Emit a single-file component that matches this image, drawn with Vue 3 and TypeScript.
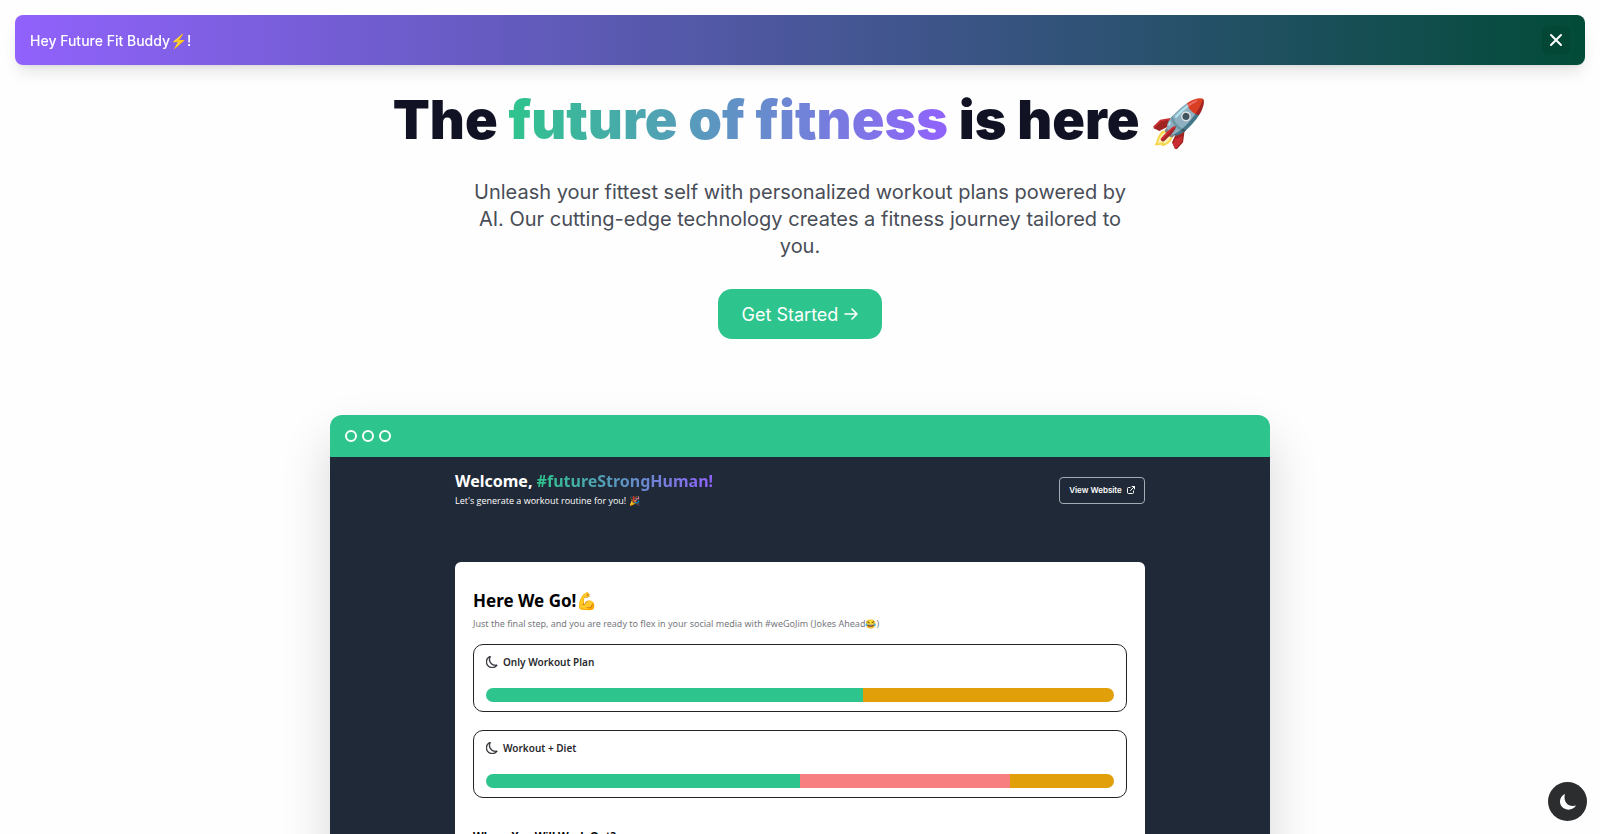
<script setup lang="ts">
import { ref } from 'vue'

interface Segment { color: string; share: number }
interface Plan { name: string; segments: Segment[] }

const bannerOpen = ref(true)
const dark = ref(false)

const plans: Plan[] = [
  {
    name: 'Only Workout Plan',
    segments: [
      { color: '#2ec48d', share: 60 },
      { color: '#e19f09', share: 40 },
    ],
  },
  {
    name: 'Workout + Diet',
    segments: [
      { color: '#2ec48d', share: 50 },
      { color: '#f87f80', share: 33.4 },
      { color: '#e19f09', share: 16.6 },
    ],
  },
]
</script>

<template>
  <div class="page">
    <aside v-if="bannerOpen" class="banner">
      <span>Hey Future Fit Buddy⚡!</span>
      <button type="button" class="close" aria-label="Close" @click="bannerOpen = false">
        <svg viewBox="0 0 14 14" width="14" height="14" fill="none" stroke="currentColor" stroke-width="2" stroke-linecap="round">
          <path d="M2 2l10 10M12 2L2 12" />
        </svg>
      </button>
    </aside>

    <main>
      <section class="hero">
        <h1>The <span class="gradient">future of fitness</span> is here <span class="rocket">🚀</span></h1>
        <p>
          Unleash your fittest self with personalized workout plans powered by
          AI. Our cutting-edge technology creates a fitness journey tailored to
          you.
        </p>
        <a href="#start" class="cta">
          Get Started
          <svg viewBox="0 0 14 14" width="14" height="14" fill="none" stroke="currentColor" stroke-width="1.6" stroke-linecap="round" stroke-linejoin="round">
            <path d="M1 7h12M8 2l5 5-5 5" />
          </svg>
        </a>
      </section>

      <section class="window">
        <div class="titlebar"><i></i><i></i><i></i></div>
        <div class="screen">
          <header class="welcome">
            <div>
              <h2>Welcome, <span class="gradient">#futureStrongHuman!</span></h2>
              <p>Let's generate a workout routine for you! 🎉</p>
            </div>
            <a href="#website" class="visit">
              View Website
              <svg viewBox="0 0 16 16" width="8" height="8" fill="none" stroke="currentColor" stroke-width="2" stroke-linecap="round" stroke-linejoin="round">
                <path d="M6 3H3a2 2 0 0 0-2 2v8a2 2 0 0 0 2 2h8a2 2 0 0 0 2-2v-3M10 1h5v5M15 1L7 9" />
              </svg>
            </a>
          </header>

          <div class="card">
            <h3>Here We Go!💪</h3>
            <p class="hint">Just the final step, and you are ready to flex in your social media with #weGoJim (Jokes Ahead😂)</p>
            <article v-for="plan in plans" :key="plan.name" class="plan">
              <h4>
                <svg viewBox="0 0 16 16" width="12" height="12" fill="currentColor">
                  <path d="M6 .278a.768.768 0 0 1 .08.858 7.208 7.208 0 0 0-.878 3.46c0 4.021 3.278 7.277 7.318 7.277.527 0 1.04-.055 1.533-.16a.787.787 0 0 1 .81.316.733.733 0 0 1-.031.893A8.349 8.349 0 0 1 8.344 16C3.734 16 0 12.286 0 7.71 0 4.266 2.114 1.312 5.124.06A.752.752 0 0 1 6 .278zM4.858 1.311A7.269 7.269 0 0 0 1.025 7.71c0 4.02 3.279 7.276 7.319 7.276a7.316 7.316 0 0 0 5.205-2.162c-.337.042-.68.063-1.029.063-4.61 0-8.343-3.714-8.343-8.29 0-1.167.242-2.278.681-3.286z" stroke="currentColor" stroke-width=".6" />
                </svg>
                {{ plan.name }}
              </h4>
              <div class="bar">
                <span
                  v-for="(segment, index) in plan.segments"
                  :key="index"
                  :style="{ width: segment.share + '%', background: segment.color }"
                ></span>
              </div>
            </article>
            <h4 class="question">Where You Will Work Out?</h4>
          </div>
        </div>
      </section>
    </main>

    <button type="button" class="theme" aria-label="Toggle dark mode" :aria-pressed="dark" @click="dark = !dark">
      <svg viewBox="0 0 18 18" width="18" height="18" fill="#fff">
        <path d="M6 1C4 7 8 15 17 12.500C14 18 5 18 2 12.500C-.5 8 2 2.500 6 1Z" />
      </svg>
    </button>
  </div>
</template>

<style>
body {
  margin: 0;
  background: #fefefe;
}
</style>

<style scoped>
* {
  box-sizing: border-box;
}
h1, h2, h3, h4, p {
  margin: 0;
}
.page {
  height: 100vh;
  overflow: hidden;
  font-family: Inter, "Noto Sans", sans-serif;
  color: #111325;
}
.banner {
  position: fixed;
  top: 15px;
  left: 15px;
  right: 15px;
  display: flex;
  align-items: center;
  justify-content: space-between;
  height: 50px;
  padding: 0 15px;
  border-radius: 8px;
  background: linear-gradient(to right, #9162fc, #024b38);
  box-shadow: 0 10px 15px -3px rgba(0, 0, 0, 0.1), 0 4px 6px -4px rgba(0, 0, 0, 0.1);
  color: #fff;
  font-size: 14px;
  font-weight: 500;
}
.close {
  display: grid;
  place-items: center;
  width: 28px;
  height: 28px;
  padding: 0;
  border: 0;
  border-radius: 6px;
  background: rgba(0, 60, 40, 0.3);
  color: #fff;
}
.hero {
  display: flex;
  flex-direction: column;
  align-items: center;
  padding-top: 90px;
  text-align: center;
}
h1 {
  font-size: 54px;
  line-height: 60px;
  font-weight: 900;
}
.rocket {
  font-size: 46px;
  line-height: 46px;
}
.gradient {
  background: linear-gradient(to right, #2ec48d, #9162fc);
  background-clip: text;
  -webkit-background-clip: text;
  color: transparent;
}
.hero p {
  max-width: 680px;
  margin-top: 29px;
  color: #484d57;
  font-size: 20px;
  line-height: 27px;
}
.cta {
  display: flex;
  align-items: center;
  gap: 6px;
  height: 50px;
  margin-top: 29px;
  padding: 0 24px;
  border-radius: 14px;
  background: #2ec48d;
  color: #fff;
  font-size: 18px;
  text-decoration: none;
}
.window {
  width: 940px;
  max-width: 90%;
  margin: 76px auto 0;
  border-radius: 12px;
  box-shadow: 0 25px 50px rgba(0, 0, 0, 0.16);
  overflow: hidden;
}
.titlebar {
  display: flex;
  align-items: center;
  gap: 5px;
  height: 42px;
  padding: 0 15px;
  background: #2ec48d;
}
.titlebar i {
  width: 12px;
  height: 12px;
  border: 2px solid #fff;
  border-radius: 50%;
}
.screen {
  padding: 14px 125px 40px;
  background: #1f2937;
  font-family: "Noto Sans", "Open Sans", sans-serif;
}
.welcome {
  display: flex;
  align-items: center;
  justify-content: space-between;
  height: 38px;
  color: #fff;
}
.welcome h2 {
  font-size: 16px;
  line-height: 22px;
}
.welcome p {
  font-family: "Open Sans", sans-serif;
  font-size: 9px;
  line-height: 18px;
}
.visit {
  display: flex;
  align-items: center;
  justify-content: center;
  gap: 5px;
  width: 86px;
  height: 27px;
  border: 1px solid #a5abb5;
  border-radius: 4px;
  color: #fff;
  font-family: Inter, sans-serif;
  font-size: 8px;
  font-weight: 600;
  text-decoration: none;
}
.card {
  margin-top: 53px;
  padding: 26px 18px;
  border-radius: 6px;
  background: #fff;
}
h3 {
  color: #000;
  font-size: 17px;
  line-height: 26px;
}
.hint {
  color: #77797e;
  font-size: 9px;
  line-height: 20px;
}
.plan {
  height: 68px;
  margin-top: 18px;
  padding: 10px 12px;
  border: 1px solid #222428;
  border-radius: 10px;
}
.hint + .plan {
  margin-top: 10px;
}
.plan h4 {
  display: flex;
  align-items: center;
  gap: 5px;
  color: #27292d;
  font-size: 10px;
  line-height: 14px;
  font-weight: 600;
}
.bar {
  display: flex;
  height: 14px;
  margin-top: 19px;
  border-radius: 7px;
  overflow: hidden;
}
.question {
  margin-top: 30px;
  color: #000;
  font-size: 11px;
  line-height: 16px;
}
.theme {
  position: fixed;
  right: 13px;
  bottom: 13px;
  display: grid;
  place-items: center;
  width: 39px;
  height: 39px;
  padding: 0;
  border: 0;
  border-radius: 50%;
  background: #2c2d2f;
}
</style>
